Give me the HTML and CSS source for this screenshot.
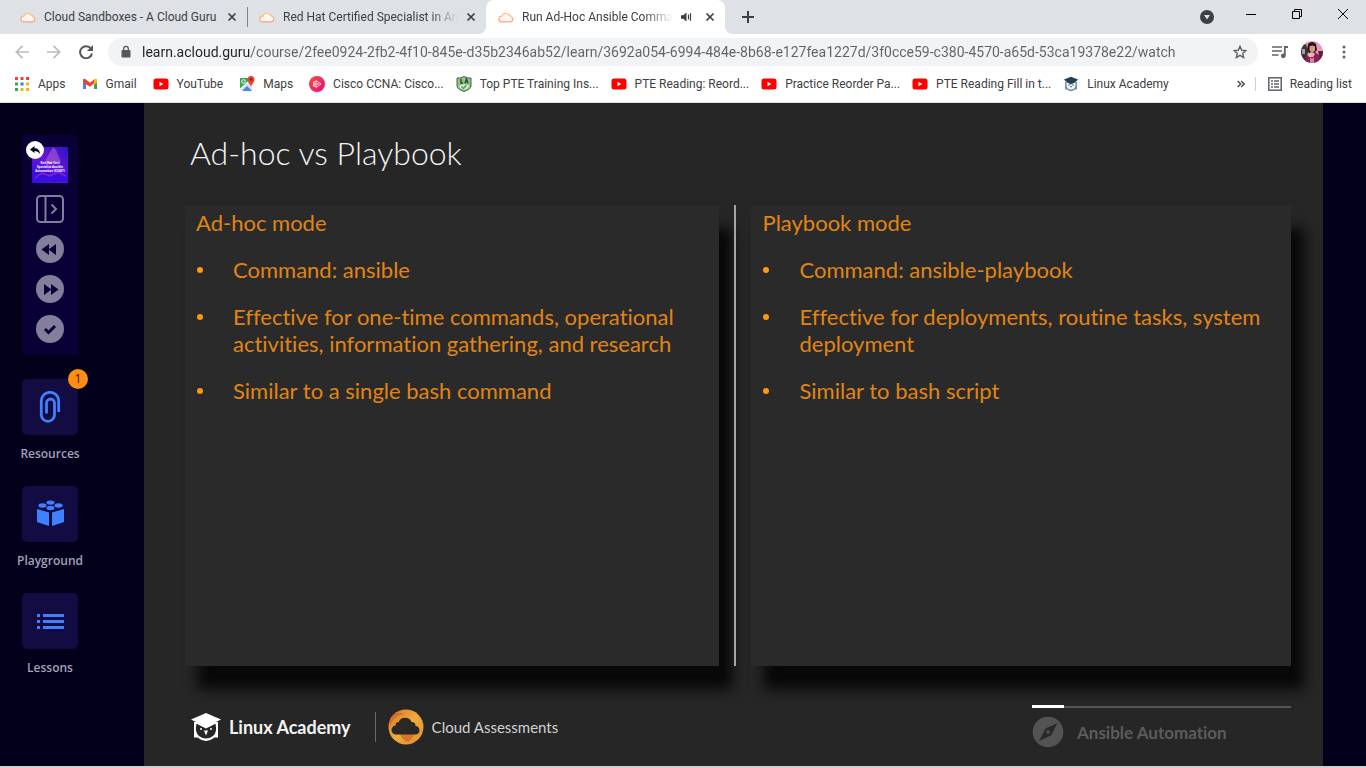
FILE: index.html
```html
<!DOCTYPE html>
<html lang="en">
<head>
<meta charset="utf-8">
<meta name="viewport" content="width=device-width, initial-scale=1">
<title>Run Ad-Hoc Ansible Commands</title>
<link rel="stylesheet" href="styles.css">
</head>
<body>
<svg class="defs" aria-hidden="true">
  <defs>
    <symbol id="cloud" viewBox="0 0 16 12"><path d="M3.600 10.800h8.800a2.700 2.700 0 0 0 .4-5.300 1.800 1.800 0 0 0-2.200-1.600A3.700 3.700 0 0 0 3.900 5.200 2.800 2.800 0 0 0 3.600 10.800Z" fill="#fff6ee" stroke="url(#cloudline)" stroke-width="1.200"/></symbol>
    <linearGradient id="cloudline" x1="0" y1="0" x2="0" y2="1"><stop offset="0" stop-color="#fcc27a"/><stop offset="1" stop-color="#f7a284"/></linearGradient>
    <symbol id="close" viewBox="0 0 10 10"><path d="M1.500 1.500l7 7M8.500 1.500l-7 7" stroke="#3c4043" stroke-width="1.700" fill="none"/></symbol>
    <symbol id="youtube" viewBox="0 0 16 16"><rect x="0.500" y="2.500" width="15" height="11" rx="2.500" fill="#f00"/><path d="M6.500 5.800v4.400L10.300 8z" fill="#fff"/></symbol>
    <linearGradient id="pink" x1="0" y1="0" x2="1" y2="1"><stop offset="0" stop-color="#f0503c"/><stop offset="1" stop-color="#f0087f"/></linearGradient>
    <linearGradient id="gold" x1="0" y1="0" x2="1" y2="1"><stop offset="0" stop-color="#d9702b"/><stop offset="0.500" stop-color="#efac3c"/><stop offset="1" stop-color="#e08a30"/></linearGradient>
    <linearGradient id="cover" x1="0" y1="1" x2="1" y2="0"><stop offset="0" stop-color="#2a12e8"/><stop offset="0.500" stop-color="#6a16d6"/><stop offset="1" stop-color="#3111c8"/></linearGradient>
    <clipPath id="face"><circle cx="11" cy="11" r="11"/></clipPath>
  </defs>
</svg>

<header class="browser">
  <div class="tabstrip">
    <div class="tab">
      <svg class="tab-icon"><use href="#cloud"/></svg>
      <a class="tab-title" href="#">Cloud Sandboxes - A Cloud Guru</a>
      <button class="tab-close" aria-label="Close tab"><svg width="10" height="10"><use href="#close"/></svg></button>
    </div>
    <div class="tab tab-split">
      <svg class="tab-icon"><use href="#cloud"/></svg>
      <a class="tab-title faded" href="#">Red Hat Certified Specialist in An</a>
      <button class="tab-close" aria-label="Close tab"><svg width="10" height="10"><use href="#close"/></svg></button>
    </div>
    <div class="tab tab-active">
      <svg class="tab-icon"><use href="#cloud"/></svg>
      <a class="tab-title faded" href="#">Run Ad-Hoc Ansible Comma</a>
      <button class="tab-sound" aria-label="Mute tab"><svg width="12" height="10" viewBox="0 0 12 10"><path d="M0 3.300h2.200L5.500.5v9L2.200 6.700H0z" fill="#3c4043"/><path d="M7.500 2.500v5M9.500 1.200v7.600" stroke="#3c4043" stroke-width="1.200"/></svg></button>
      <button class="tab-close" aria-label="Close tab"><svg width="10" height="10"><use href="#close"/></svg></button>
    </div>
    <button class="newtab" aria-label="New tab"><svg width="12" height="12" viewBox="0 0 12 12"><path d="M6 0v12M0 6h12" stroke="#3c4043" stroke-width="2"/></svg></button>
    <div class="window-controls">
      <button class="win" aria-label="Search tabs"><svg width="14" height="14" viewBox="0 0 14 14"><circle cx="7" cy="7" r="7" fill="#3c4043"/><path d="M4 5h6l-3 4.500z" fill="#dee1e6"/></svg></button>
      <button class="win" aria-label="Minimize"><svg width="10" height="10" viewBox="0 0 10 10"><path d="M0 5.500h10" stroke="#000"/></svg></button>
      <button class="win" aria-label="Restore"><svg width="10" height="10" viewBox="0 0 10 10"><path d="M.5 2.500h7v7h-7zM2.500 2.500v-2h7v7h-2" fill="none" stroke="#000"/></svg></button>
      <button class="win" aria-label="Close"><svg width="10" height="10" viewBox="0 0 10 10"><path d="M0 0l10 10M10 0L0 10" stroke="#000"/></svg></button>
    </div>
  </div>

  <div class="toolbar">
    <button class="tool" aria-label="Back"><svg width="14" height="14" viewBox="0 0 14 14"><path d="M14 7H1.500M7.500.8L1.300 7l6.200 6.200" fill="none" stroke="#babcbe" stroke-width="1.700"/></svg></button>
    <button class="tool" aria-label="Forward"><svg width="14" height="14" viewBox="0 0 14 14"><path d="M0 7h12.500M6.500.8L12.700 7l-6.200 6.200" fill="none" stroke="#babcbe" stroke-width="1.700"/></svg></button>
    <button class="tool" aria-label="Reload"><svg width="14" height="14" viewBox="0 0 14 14"><path d="M12 3.800A6 6 0 1 0 13 8.500" fill="none" stroke="#54585c" stroke-width="2"/><path d="M14 0v6H8z" fill="#54585c"/></svg></button>
    <form class="omnibox">
      <svg width="10" height="14" viewBox="0 0 10 14"><rect x="0.500" y="5" width="9" height="7.500" rx="1" fill="#54585c"/><path d="M2.700 5.500V3.600a2.300 2.300 0 0 1 4.600 0v1.900" fill="none" stroke="#54585c" stroke-width="1.300"/></svg>
      <input class="address" type="text" aria-label="Address" value="learn.acloud.guru/course/2fee0924-2fb2-4f10-845e-d35b2346ab52/learn/3692a054-6994-484e-8b68-e127fea1227d/3f0cce59-c380-4570-a65d-53ca19378e22/watch">
      <button class="tool-star" type="button" aria-label="Bookmark this tab"><svg width="14" height="14" viewBox="0 0 14 14"><path d="M7 1.300l1.700 4 4.200.3-3.200 2.800 1 4.200L7 10.400l-3.700 2.200 1-4.200L1.100 5.600l4.200-.3z" fill="none" stroke="#5f6368" stroke-width="1.400"/></svg></button>
    </form>
    <div class="actions">
      <button class="tool" aria-label="Media"><svg width="16" height="14" viewBox="0 0 16 14"><path d="M0 2h10M0 6h10M0 10h6.500" stroke="#5f6368" stroke-width="1.600"/><path d="M12.800 10.500V2H16" fill="none" stroke="#5f6368" stroke-width="1.800"/><circle cx="11.300" cy="10.800" r="2.400" fill="#5f6368"/></svg></button>
      <button class="tool" aria-label="Profile"><svg width="22" height="22" viewBox="0 0 22 22"><g clip-path="url(#face)"><rect width="22" height="22" fill="#e79ac0"/><path d="M0 5l5-2 2 8-1 11H0z" fill="#3a3437"/><path d="M1 8h3v5H1z" fill="#a7a0a5"/><path d="M7 3q4-4 8 0l1 6-3 3H8L6 9z" fill="#241519"/><path d="M8.500 5.500q2.800-2 5.500 0v4q-2.700 3.500-5.500 0z" fill="#d69a82"/><path d="M5 14l4-3h5l5 4v7H5z" fill="#8d2058"/><path d="M6 13l5-2 3 2-2 3H8z" fill="#e8bba6"/><path d="M9 16l2 2 2-2v6H9z" fill="#c78aae"/><path d="M17 10h5v8l-3 1z" fill="#5b2334"/></g></svg></button>
      <button class="tool" aria-label="Menu"><svg width="4" height="14" viewBox="0 0 4 14"><g fill="#5f6368"><circle cx="2" cy="2" r="1.500"/><circle cx="2" cy="7" r="1.500"/><circle cx="2" cy="12" r="1.500"/></g></svg></button>
    </div>
  </div>

  <nav class="bookmarks" aria-label="Bookmarks">
    <a class="bookmark" href="#"><svg width="16" height="16" viewBox="0 0 16 16"><path d="M1 1h3v3H1zM6.500 1h3v3h-3zM12 1h3v3h-3z" fill="#ea4335"/><path d="M1 6.500h3v3H1zM1 12h3v3H1z" fill="#34a853"/><path d="M6.500 6.500h3v3h-3z" fill="#1a83f0"/><path d="M12 6.500h3v3h-3zM6.500 12h3v3h-3zM12 12h3v3h-3z" fill="#f5b40a"/></svg>Apps</a>
    <a class="bookmark" href="#"><svg width="16" height="16" viewBox="0 0 16 16"><path d="M1 3.500V13h3V7z" fill="#4285f4"/><path d="M15 3.500V13h-3V7z" fill="#34a853"/><path d="M1 3.500Q2 2 4 3.500l4 3.200 4-3.200v4l-4 3.200L1 6.500z" fill="#ea4335"/><path d="M12 3.500q2-1.500 3 0v3l-3 2z" fill="#fbbc04"/></svg>Gmail</a>
    <a class="bookmark" href="#"><svg width="16" height="16"><use href="#youtube"/></svg>YouTube</a>
    <a class="bookmark" href="#"><svg width="16" height="16" viewBox="0 0 16 16"><path d="M1 2h12v12H1z" fill="#36a853"/><path d="M1 14L13 3v11z" fill="#d8dce2"/><path d="M3 15l5-5 5 5z" fill="#4285f4"/><path d="M1 13.500L12.500 3" stroke="#fff" stroke-width="1.500"/><circle cx="4.500" cy="5.500" r="1.800" fill="none" stroke="#fff"/><path d="M12 10Q8.500 5.500 8.500 3.500a3.500 3.500 0 0 1 7 0Q15.500 5.500 12 10z" fill="#ea4335"/><circle cx="12" cy="3.500" r="1.300" fill="#8d2219"/></svg>Maps</a>
    <a class="bookmark bookmark-long" href="#"><svg width="16" height="16" viewBox="0 0 16 16"><circle cx="8" cy="8" r="8" fill="url(#pink)"/><path d="M7 4.500v7l5-3.500zM4.500 5.500v5M5.800 5v6M7 8h3" fill="none" stroke="#ffd5dd"/></svg>Cisco CCNA: Cisco...</a>
    <a class="bookmark bookmark-long" href="#"><svg width="16" height="16" viewBox="0 0 16 16"><path d="M1 2q3.500.5 7-1.500Q11.500 2.500 15 2v8q0 3-7 5.500Q1 13 1 10z" fill="#9cc55b" stroke="#375f8c"/><path d="M5 3v4h2M9 7.500L10.500 3 12 7.500" fill="none" stroke="#1c4579" stroke-width="1.400"/><path d="M3 10q5-3 10-1l-1 3-4 2-4-2z" fill="#d8edee"/><path d="M5.500 10.500l2 2 3-3.500" fill="none" stroke="#57a03f" stroke-width="1.500"/></svg>Top PTE Training Ins...</a>
    <a class="bookmark bookmark-long" href="#"><svg width="16" height="16"><use href="#youtube"/></svg>PTE Reading: Reord...</a>
    <a class="bookmark bookmark-long" href="#"><svg width="16" height="16"><use href="#youtube"/></svg>Practice Reorder Pa...</a>
    <a class="bookmark bookmark-long" href="#"><svg width="16" height="16"><use href="#youtube"/></svg>PTE Reading Fill in t...</a>
    <a class="bookmark" href="#"><svg width="16" height="16" viewBox="0 0 16 16"><path d="M2 6v7.500h2Q8 17 12 13.500h2V6z" fill="#7193a9"/><path d="M3.500 6.500q-.5 7 4.500 7t4.500-7z" fill="#f4f8fa"/><path d="M1 3.500L8 .8l7 2.700L12.500 6 8 8.500 3.500 6z" fill="#243f55"/><circle cx="6" cy="9" r="0.700" fill="#243f55"/><circle cx="10" cy="9" r="0.700" fill="#243f55"/><path d="M7.200 10h1.600L8 12z" fill="#243f55"/></svg>Linux Academy</a>
    <div class="bookmarks-end">
      <button class="more" aria-label="More bookmarks"><svg width="8" height="8" viewBox="0 0 8 8"><path d="M.7 1l3 3-3 3M4.200 1l3 3-3 3" fill="none" stroke="#45494d" stroke-width="1.400"/></svg></button>
      <a class="bookmark reading" href="#"><svg width="14" height="14" viewBox="0 0 14 14"><rect x="0.800" y="0.800" width="12.400" height="12.400" fill="none" stroke="#5f6368" stroke-width="1.500"/><path d="M3 4h2M3 7h2M3 10h2M6 4h5M6 7h5M6 10h5" stroke="#5f6368" stroke-width="1.300"/></svg>Reading list</a>
    </div>
  </nav>
</header>

<div class="course">
  <aside class="sidebar">
    <div class="toolbox">
      <a class="cover" href="#" aria-label="Back to course">
        <svg width="36" height="36" viewBox="0 0 36 36"><rect width="36" height="36" rx="1" fill="url(#cover)"/><path d="M14 12l7-12 3 3 5 12-15 3z" fill="#9950ce" opacity="0.750"/><path d="M0 24l10-2 9 5 7-5 10 4v9H0z" fill="#3b0de2"/><path d="M3 31l7-5 8 3 8-4 8 4" fill="none" stroke="#8c21d2" stroke-width="1.500"/></svg>
        <span class="cover-text">Red Hat Cert<br>Specialist Ansible<br>Automation (EX407)</span>
        <span class="cover-back"><svg width="10" height="8" viewBox="0 0 10 8"><path d="M0 3.500L4.500 0v2.200Q9.500 2 10 8 8 4.800 4.500 5v2z" fill="#02001b"/></svg></span>
      </a>
      <button class="expand" aria-label="Expand panel"><svg width="28" height="28" viewBox="0 0 28 28"><rect x="1" y="1" width="26" height="26" rx="3.500" fill="none" stroke="#827e9b" stroke-width="2"/><path d="M9.500 1v26M15.500 9.500l4.500 4.500-4.500 4.500" fill="none" stroke="#827e9b" stroke-width="2"/></svg></button>
      <button class="round" aria-label="Rewind"><svg width="28" height="28" viewBox="0 0 28 28"><path d="M5.500 14.500L13 9v11zM12.500 14.500L20 9v11z"/></svg></button>
      <button class="round" aria-label="Fast forward"><svg width="28" height="28" viewBox="0 0 28 28"><path d="M22.500 14.500L15 9v11zM15.500 14.500L8 9v11z"/></svg></button>
      <button class="round" aria-label="Mark complete"><svg width="28" height="28" viewBox="0 0 28 28"><path class="tick" d="M9 14l3.500 3.500 6.500-6.500"/></svg></button>
    </div>
    <nav class="side-nav" aria-label="Lesson tools">
      <a class="side-link" href="#"><span class="tile"><svg width="28" height="32" viewBox="0 0 28 32"><path d="M22.700 21V10a8.700 8.700 0 0 0-17.400 0V23.700a6.600 6.600 0 0 0 13.200 0V12a4 4 0 0 0-8 0V22.500" fill="none" stroke="#4080ff" stroke-width="2.800"/></svg><span class="badge">1</span></span>Resources</a>
      <a class="side-link" href="#"><span class="tile"><svg width="28" height="28" viewBox="0 0 28 28"><g fill="#4080ff"><path d="M1 9l12 3.500V26L1 22zM28 9l-12 3.500V26l12-4z"/><ellipse cx="14.500" cy="2.600" rx="4" ry="2.200"/><ellipse cx="6.500" cy="5.500" rx="4" ry="2.200"/><ellipse cx="22.500" cy="5.500" rx="4" ry="2.200"/><ellipse cx="14.500" cy="8" rx="4" ry="2.200"/></g></svg></span>Playground</a>
      <a class="side-link" href="#"><span class="tile"><svg width="28" height="28" viewBox="0 0 28 28"><path d="M1 7h3v3H1zM7 7h21v3H7zM1 13h3v3H1zM7 13h21v3H7zM1 19h3v3H1zM7 19h21v3H7z" fill="#4080ff"/></svg></span>Lessons</a>
    </nav>
  </aside>

  <main class="slide">
    <h1 class="slide-title">Ad-hoc vs Playbook</h1>
    <div class="panels">
      <section class="panel">
        <h2 class="panel-title">Ad-hoc mode</h2>
        <ul class="points">
          <li>Command: ansible</li>
          <li>Effective for one-time commands, operational activities, information gathering, and research</li>
          <li>Similar to a single bash command</li>
        </ul>
      </section>
      <div class="rule"></div>
      <section class="panel">
        <h2 class="panel-title">Playbook mode</h2>
        <ul class="points">
          <li>Command: ansible-playbook</li>
          <li>Effective for deployments, routine tasks, system deployment</li>
          <li>Similar to bash script</li>
        </ul>
      </section>
    </div>
    <footer class="slide-footer">
      <div class="brands">
        <div class="brand academy"><svg width="30" height="30" viewBox="0 0 30 30"><path d="M3 10v15.500h3.500Q15 32.500 23.500 25.500H27V10z" fill="#fff"/><path d="M5.500 12Q3.500 20 8 24q7 5 14 0 4.500-4 2.500-12z" fill="#262626"/><path d="M0 7.500L15 1l15 6.500-6 3-1 2-8 4-8-4-1-2z" fill="#fff"/><circle cx="10" cy="17" r="1" fill="#fff"/><circle cx="20" cy="17" r="1" fill="#fff"/><path d="M13 18.500h4l-2 5z" fill="#fff"/></svg>Linux Academy</div>
        <div class="brand assess"><svg width="36" height="36" viewBox="0 0 36 36"><circle cx="18" cy="18" r="17.500" fill="url(#gold)"/><path d="M2 18q2-11 14-13Q7 1 2 10z" fill="#d4702b"/><path d="M12 25q7-1 14 0-1 5-6 8-5-1-8-8z" fill="#d8742c"/><path d="M8 25.500a4.500 4.500 0 0 1 0-9 2 2 0 0 1 2.500-3 7 7 0 0 1 13-.5 3.500 3.500 0 0 1 4 4 4.300 4.300 0 0 1 .5 8.500z" fill="#2a2724"/></svg>Cloud Assessments</div>
      </div>
      <div class="topic">
        <div class="track"><div class="track-fill"></div></div>
        <div class="topic-name"><svg width="32" height="32" viewBox="0 0 32 32"><circle cx="16" cy="16" r="15.300" fill="#535353"/><path d="M25.500 7L19 19.500 7 25l6.500-12.500z" fill="#292929"/><circle cx="16" cy="16" r="1.800" fill="#535353"/></svg>Ansible Automation</div>
      </div>
    </footer>
  </main>
</div>
<div class="taskbar"></div>
</body>
</html>
```
FILE: styles.css
```css
* { box-sizing: border-box; }

body {
  margin: 0;
  min-height: 100vh;
  display: flex;
  flex-direction: column;
  font-family: Roboto, "Noto Sans", sans-serif;
  font-size: 12px;
  background: #02001b;
}

svg { display: block; flex: none; }
a { color: inherit; text-decoration: none; }
button { display: grid; place-items: center; padding: 0; border: 0; background: none; font: inherit; }
.defs { position: absolute; width: 0; height: 0; }

/* Tab strip */
.browser { background: #fff; border-bottom: 1px solid #dcdde0; }
.tabstrip { display: flex; height: 34px; padding-left: 8px; background: #dee1e6; color: #3c4043; }
.tab { display: flex; align-items: center; flex: 0 1 239px; min-width: 0; padding: 0 10px 0 12px; }
.tab-split { position: relative; }
.tab-split::before { content: ""; position: absolute; left: 0; top: 7px; width: 1px; height: 20px; background: #808388; }
.tab-icon { width: 16px; height: 12px; margin-right: 8px; }
.tab-title { flex: 1; min-width: 0; overflow: hidden; white-space: nowrap; }
.faded { -webkit-mask-image: linear-gradient(to left, transparent, #000 28px); mask-image: linear-gradient(to left, transparent, #000 28px); }
.tab-close { width: 10px; margin-left: 8px; }
.tab-sound { width: 12px; margin: 0 4px 0 8px; }
.tab-active { position: relative; background: #fff; border-radius: 8px 8px 0 0; }
.tab-active::before, .tab-active::after { content: ""; position: absolute; bottom: 0; width: 8px; height: 8px; }
.tab-active::before { left: -8px; background: radial-gradient(circle at 0 0, transparent 8px, #fff 8px); }
.tab-active::after { right: -8px; background: radial-gradient(circle at 100% 0, transparent 8px, #fff 8px); }
.newtab { width: 28px; margin-left: 9px; }
.window-controls { display: flex; height: 28px; margin-left: auto; }
.win { width: 46px; }
.win:first-child { width: 42px; height: 34px; }

/* Toolbar */
.toolbar { display: flex; align-items: center; height: 36px; padding: 0 6px; }
.tool { width: 32px; height: 32px; }
.omnibox { display: flex; align-items: center; flex: 1; height: 28px; margin: 0 6px; padding: 0 11px 0 13px; border-radius: 14px; background: #f1f3f4; }
.address {
  flex: 1;
  min-width: 0;
  height: 28px;
  margin-left: 11px;
  padding: 0;
  border: 0;
  outline: 0;
  font: 14px Roboto, "Noto Sans", sans-serif;
  background: linear-gradient(to right, #202124 109px, #5f6368 109px);
  -webkit-background-clip: text;
  background-clip: text;
  color: transparent;
}
.actions { display: flex; }

/* Bookmarks */
.bookmarks { display: flex; align-items: center; height: 32px; padding: 0 14px 4px; color: #3c4043; white-space: nowrap; }
.bookmark { display: flex; align-items: center; gap: 8px; margin-right: 16px; }
.bookmark-long { margin-right: 12px; }
.bookmarks-end { display: flex; align-items: center; margin-left: auto; }
.more { width: 8px; margin-right: 10px; }
.reading { margin-right: 0; padding-left: 12px; border-left: 1px solid #cfd1d4; }

/* Course shell */
.course { display: flex; flex: 1; }
.sidebar { width: 144px; padding: 32px 22px 0; color: #a3a1b8; font-family: "Open Sans", "Noto Sans", sans-serif; }
.toolbox { display: flex; flex-direction: column; align-items: center; gap: 12px; width: 56px; padding: 12px 0; border-radius: 4px; background: #090036; }
.cover { position: relative; color: #fff; }
.cover-text { position: absolute; left: 0; top: 14px; width: 36px; font-size: 3px; font-weight: 700; line-height: 4px; text-align: center; white-space: nowrap; }
.cover-back { position: absolute; left: -6px; top: -6px; display: grid; place-items: center; width: 18px; height: 18px; border-radius: 50%; background: #fff; }
.round { width: 28px; height: 28px; border-radius: 50%; background: #827e9b; fill: #090036; }
.tick { fill: none; stroke: #090036; stroke-width: 3; }
.side-nav { display: flex; flex-direction: column; align-items: center; gap: 23px; width: 56px; margin-top: 24px; }
.side-link { display: flex; flex-direction: column; align-items: center; gap: 10px; font-size: 12px; font-weight: 600; line-height: 18px; }
.tile { position: relative; display: grid; place-items: center; width: 56px; height: 56px; border-radius: 5px; background: #130c42; }
.badge { position: absolute; right: -10px; top: -10px; width: 20px; height: 20px; border-radius: 50%; background: #ff8d14; color: #33210f; font-weight: 400; line-height: 20px; text-align: center; }

/* Slide */
.slide {
  display: flex;
  flex-direction: column;
  flex: 1;
  margin-right: 43px;
  padding: 29px 32px 0 41px;
  background: #262626;
  color: #f4f4f4;
  font-family: Lato, sans-serif;
  font-variant-ligatures: none;
}
.slide-title { margin: 0 0 31px 5px; font-size: 32px; font-weight: 300; line-height: 42px; }
.panels { display: grid; grid-template-columns: 534fr 2px 539fr; gap: 15px; flex: 1; }
.panel { padding: 4px 11px; background: #2a2a2a; box-shadow: 13px 23px 12px #080808; color: #e08515; font-size: 22px; line-height: 27px; }
.panel-title { margin: 0 0 20px; font-size: 22px; font-weight: 400; }
.points { display: grid; gap: 20px; margin: 0; padding: 0; list-style: none; }
.points li { display: flex; }
.points li::before { content: ""; flex: none; width: 6px; height: 6px; margin: 11px 30px 0 1px; border-radius: 50%; background: #ff980f; }
.rule { z-index: 1; background: #a5a5a5; }
.slide-footer { position: relative; display: flex; justify-content: space-between; height: 100px; padding-left: 6px; }
.brands { display: flex; align-items: center; height: 100px; padding-top: 22px; }
.brand { display: flex; align-items: center; }
.academy { gap: 8px; height: 30px; padding-right: 24px; border-right: 1px solid #6a6a6a; font-size: 18px; font-weight: 700; }
.assess { gap: 8px; margin-left: 12px; color: #d2d2d2; font-size: 15px; }
.topic { width: 259px; padding-top: 39px; }
.track { height: 3px; background: linear-gradient(#262626 1px, #575757 1px); }
.track-fill { width: 32px; height: 3px; background: #fff; }
.topic-name { display: flex; align-items: center; gap: 13px; margin-top: 8px; color: #5c5c5c; font-size: 17px; font-weight: 700; }

.taskbar { height: 2px; background: #d0d0d0; }
```
